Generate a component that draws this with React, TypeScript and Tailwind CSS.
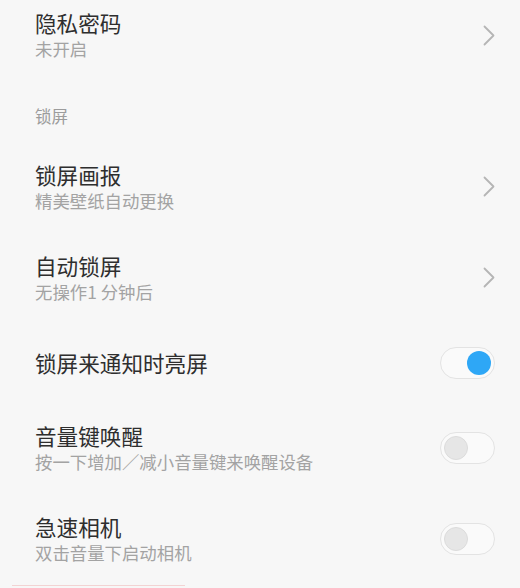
const Chevron = () => (
  <svg width="12" height="21" viewBox="0 0 12 21" fill="none">
    <polyline points="1.5,1.5 10.5,10.5 1.5,19.5" stroke="#b5b5b5" strokeWidth="1.8" strokeLinecap="round" strokeLinejoin="round" />
  </svg>
);

const Toggle = ({ on }: { on: boolean }) => (
  <div
    className={
      on
        ? 'w-[55px] h-[32px] rounded-full border border-[#e3e3e3] bg-[#fafafa] flex items-center justify-end pr-[3px]'
        : 'w-[55px] h-[32px] rounded-full border border-[#e3e3e3] bg-[#fafafa] flex items-center justify-start pl-[3px]'
    }
  >
    {on ? (
      <div className="w-[24px] h-[24px] rounded-full bg-[#2ea7f6]" />
    ) : (
      <div className="w-[24px] h-[24px] rounded-full bg-[#e6e6e6] border border-[#dcdcdc]" />
    )}
  </div>
);

type RowProps = {
  title: string;
  sub?: string;
  right: React.ReactNode;
  height: string;
};

const Row = ({ title, sub, right, height }: RowProps) => (
  <div className={`${height} flex items-center justify-between pr-[25px]`}>
    <div className="flex flex-col">
      <span className="text-[21.6px] leading-[26px] text-[#2e2e2e]">{title}</span>
      {sub && <span className="mt-[2px] text-[17.4px] leading-[22px] text-[#a3a3a3]">{sub}</span>}
    </div>
    {right}
  </div>
);

export default function App() {
  return (
    <div
      className="w-[520px] h-[588px] overflow-hidden bg-[#f7f7f7] pl-[35px] relative"
      style={{ fontFamily: '"Noto Sans CJK SC", "Noto Sans", sans-serif' }}
    >
      <Row title="隐私密码" sub="未开启" right={<Chevron />} height="h-[70px]" />
      <div className="h-[71px] pt-[36px]">
        <span className="block text-[16.5px] leading-[20px] text-[#9c9c9c]">锁屏</span>
      </div>
      <Row title="锁屏画报" sub="精美壁纸自动更换" right={<Chevron />} height="h-[91px]" />
      <Row title="自动锁屏" sub="无操作1 分钟后" right={<Chevron />} height="h-[91px]" />
      <Row title="锁屏来通知时亮屏" right={<Toggle on />} height="h-[79px]" />
      <Row title="音量键唤醒" sub="按一下增加／减小音量键来唤醒设备" right={<Toggle on={false} />} height="h-[91px]" />
      <Row title="急速相机" sub="双击音量下启动相机" right={<Toggle on={false} />} height="h-[91px]" />
      <div className="absolute left-[12px] bottom-[2px] w-[173px] h-[1px] bg-[#f3d3d3]" />
    </div>
  );
}
